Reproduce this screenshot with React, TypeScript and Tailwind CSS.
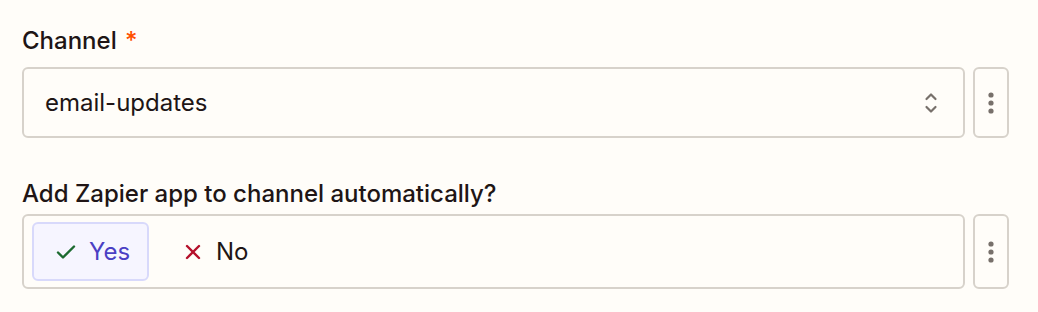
function Kebab() {
  return (
    <button className="flex w-[36px] shrink-0 items-center justify-center rounded-[6px] border-2 border-[#d7d2cb] bg-[#fffdf9]">
      <svg width="6" height="22" viewBox="0 0 6 22" fill="#77706b">
        <circle cx="3" cy="3" r="2.6" />
        <circle cx="3" cy="11" r="2.6" />
        <circle cx="3" cy="19" r="2.6" />
      </svg>
    </button>
  );
}

function Chevrons() {
  return (
    <svg width="14" height="24" viewBox="0 0 14 24" fill="none" stroke="#77706b" strokeWidth="2.2" strokeLinecap="round" strokeLinejoin="round">
      <path d="M2.5 8 L7 3.5 L11.5 8" />
      <path d="M2.5 16 L7 20.5 L11.5 16" />
    </svg>
  );
}

export default function App() {
  return (
    <div className="h-[312px] w-[1038px] bg-[#fffdf9] pl-[22px] pr-[29px] pt-[25px] text-[#201515]" style={{ fontFamily: 'Inter, "Noto Sans", sans-serif' }}>
      {/* Channel */}
      <div className="flex flex-col">
        <label className="text-[24px] font-medium leading-[32px]">
          Channel <span className="ml-[2px] text-[#ff4f00]">*</span>
        </label>
        <div className="mt-[10px] flex h-[71px] gap-[8px]">
          <div className="flex flex-1 items-center justify-between rounded-[6px] border-2 border-[#d7d2cb] bg-[#fffdf9] pl-[21px] pr-[25px]">
            <span className="text-[24px]">email-updates</span>
            <Chevrons />
          </div>
          <Kebab />
        </div>
      </div>

      {/* Add app */}
      <div className="mt-[40px] flex flex-col">
        <label className="text-[24px] font-medium leading-[32px]">Add Zapier app to channel automatically?</label>
        <div className="mt-[4px] flex h-[75px] gap-[8px]">
          <div className="flex flex-1 items-center gap-[10px] rounded-[6px] border-2 border-[#d7d2cb] bg-[#fffdf9] px-[8px]">
            <button className="flex h-[59px] w-[117px] items-center gap-[13px] rounded-[6px] border-2 border-[#d8d9fb] bg-[#f6f5ff] pl-[22px] text-[24px] text-[#4a3fc4]">
              <svg width="20" height="16" viewBox="0 0 20 16" fill="none" stroke="#1c6a30" strokeWidth="2.4" strokeLinecap="round" strokeLinejoin="round">
                <path d="M2 8.5 L7 13.5 L18 2.5" />
              </svg>
              Yes
            </button>
            <button className="flex h-[59px] items-center gap-[15px] px-[26px] text-[24px]">
              <svg width="16" height="16" viewBox="0 0 16 16" fill="none" stroke="#b5102b" strokeWidth="2.4" strokeLinecap="round">
                <path d="M2 2 L14 14 M14 2 L2 14" />
              </svg>
              No
            </button>
          </div>
          <Kebab />
        </div>
      </div>
    </div>
  );
}
